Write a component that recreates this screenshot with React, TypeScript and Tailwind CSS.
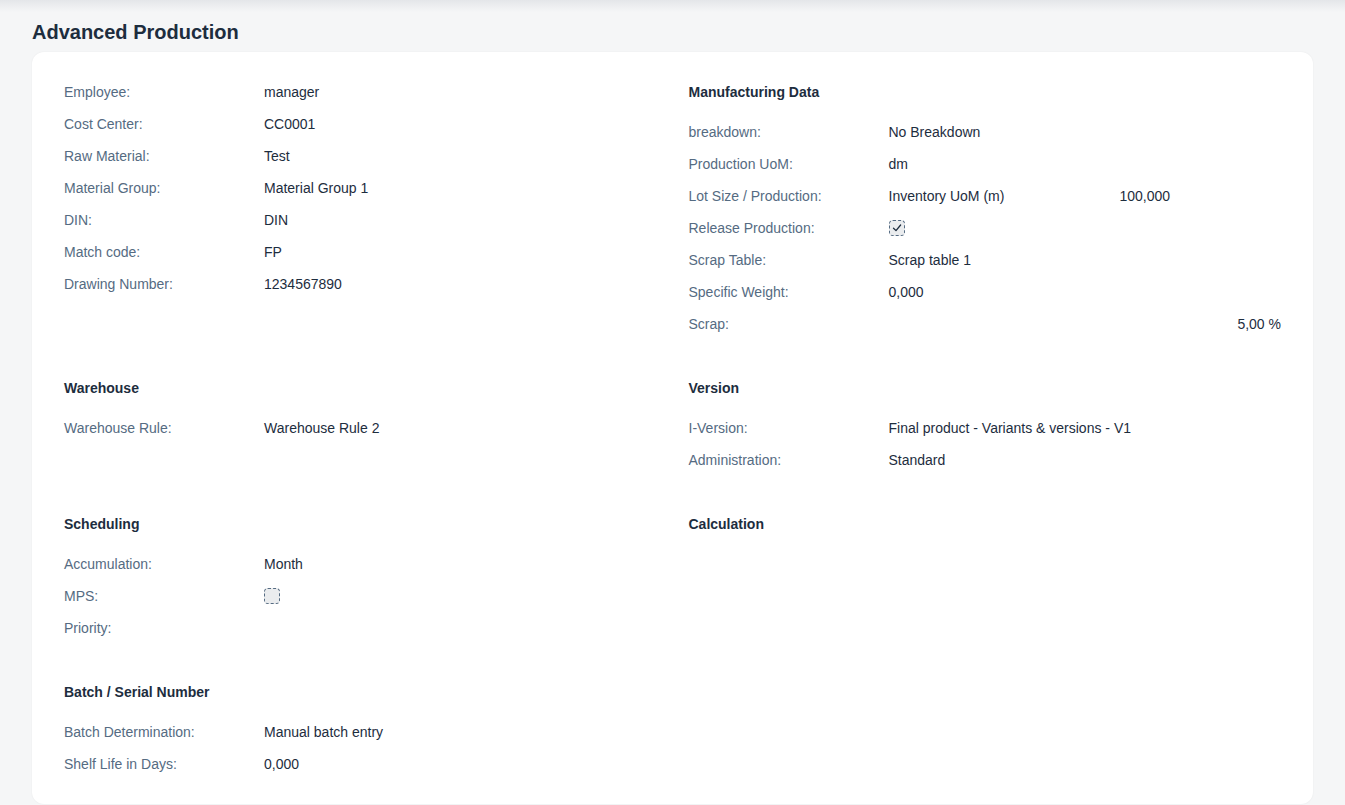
import React from 'react'

type Field = { label: string; value?: React.ReactNode }

function Check({ checked }: { checked?: boolean }) {
  return (
    <span className="inline-flex items-center justify-center w-4 h-4 rounded-[4px] border border-dashed border-[#556b82] bg-[#eaecee]">
      {checked && (
        <svg width="10" height="10" viewBox="0 0 10 10" fill="none">
          <path d="M1.5 5.2 L4 7.6 L8.6 2" stroke="#1d2d3e" strokeWidth="1.3" strokeLinecap="round" strokeLinejoin="round" />
        </svg>
      )}
    </span>
  )
}

function Section({ title, fields }: { title?: string; fields: Field[] }) {
  return (
    <div className="flex flex-col">
      {title && <h3 className="h-8 mb-2 flex items-center font-bold text-sm text-[#1d2d3e]">{title}</h3>}
      {fields.map((f) => (
        <div key={f.label} className="h-8 flex items-center text-sm">
          <span className="w-[200px] shrink-0 text-[#556b82]">{f.label}</span>
          <span className="flex-1 flex items-center text-[#1d2d3e]">{f.value}</span>
        </div>
      ))}
    </div>
  )
}

export default function App() {
  return (
    <div
      className="min-h-screen w-full bg-[#f5f6f7] relative"
      style={{ fontFamily: '"Liberation Sans", Arial, sans-serif' }}
    >
      <div className="absolute top-0 left-0 w-full h-3 bg-gradient-to-b from-[#e4e6e9] to-transparent" />
      <div className="px-8 pt-[19px]">
        <h1 className="text-xl font-bold text-[#1d2d3e] leading-[26px] mb-[7px]">Advanced Production</h1>
        <div className="bg-white rounded-xl px-8 pt-6 pb-6 grid grid-cols-2 gap-x-8 gap-y-8 shadow-[0_0_2px_rgba(0,0,0,0.06)]">
          <Section
            fields={[
              { label: 'Employee:', value: 'manager' },
              { label: 'Cost Center:', value: 'CC0001' },
              { label: 'Raw Material:', value: 'Test' },
              { label: 'Material Group:', value: 'Material Group 1' },
              { label: 'DIN:', value: 'DIN' },
              { label: 'Match code:', value: 'FP' },
              { label: 'Drawing Number:', value: '1234567890' },
            ]}
          />
          <Section
            title="Manufacturing Data"
            fields={[
              { label: 'breakdown:', value: 'No Breakdown' },
              { label: 'Production UoM:', value: 'dm' },
              {
                label: 'Lot Size / Production:',
                value: (
                  <>
                    <span className="w-[231px]">Inventory UoM (m)</span>
                    <span>100,000</span>
                  </>
                ),
              },
              { label: 'Release Production:', value: <Check checked /> },
              { label: 'Scrap Table:', value: 'Scrap table 1' },
              { label: 'Specific Weight:', value: '0,000' },
              { label: 'Scrap:', value: <span className="w-full text-right">5,00 %</span> },
            ]}
          />
          <Section title="Warehouse" fields={[{ label: 'Warehouse Rule:', value: 'Warehouse Rule 2' }]} />
          <Section
            title="Version"
            fields={[
              { label: 'I-Version:', value: 'Final product - Variants & versions - V1' },
              { label: 'Administration:', value: 'Standard' },
            ]}
          />
          <Section
            title="Scheduling"
            fields={[
              { label: 'Accumulation:', value: 'Month' },
              { label: 'MPS:', value: <Check /> },
              { label: 'Priority:' },
            ]}
          />
          <Section title="Calculation" fields={[]} />
          <Section
            title="Batch / Serial Number"
            fields={[
              { label: 'Batch Determination:', value: 'Manual batch entry' },
              { label: 'Shelf Life in Days:', value: '0,000' },
            ]}
          />
        </div>
      </div>
    </div>
  )
}
